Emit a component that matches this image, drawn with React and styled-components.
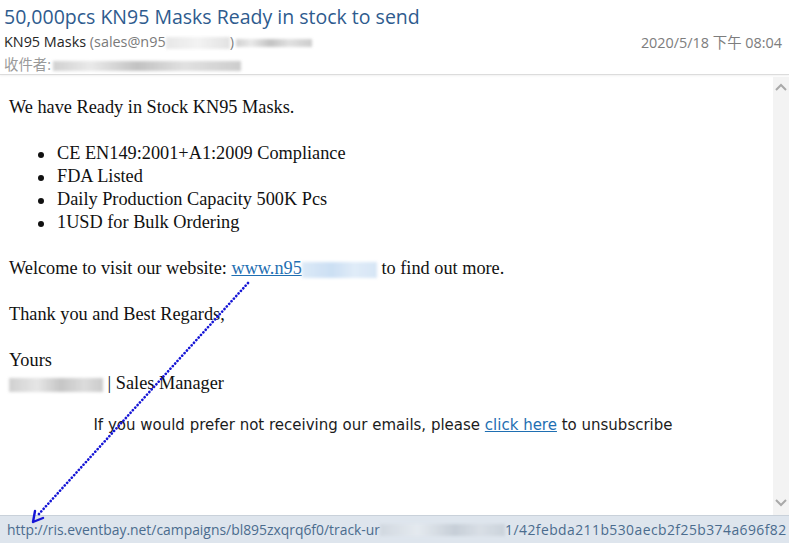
import React from "react";
import styled, { createGlobalStyle } from "styled-components";

const GlobalStyle = createGlobalStyle`
  html, body {
    margin: 0;
    padding: 0;
    background: #ffffff;
  }
  #root {
    width: 789px;
    height: 543px;
  }
`;

const Window = styled.div`
  position: relative;
  width: 789px;
  height: 543px;
  display: flex;
  flex-direction: column;
  overflow: hidden;
  background: #ffffff;
  font-family: "Open Sans", "Noto Sans CJK TC", sans-serif;
`;

const Header = styled.div`
  height: 74px;
  padding: 0 7px 0 4px;
  display: flex;
  flex-direction: column;
  border-bottom: 1px solid #dcdcdc;
  box-shadow: 0 1px 2px rgba(0, 0, 0, 0.06);
`;

const Subject = styled.div`
  font-size: 19.5px;
  line-height: 28px;
  margin-top: 3px;
  color: #2e5b8e;
  white-space: nowrap;
`;

const MetaRow = styled.div`
  display: flex;
  align-items: center;
  justify-content: space-between;
  height: 22px;
  font-size: 14.4px;
  white-space: nowrap;
`;

const Sender = styled.span`
  color: #262626;
`;

const Muted = styled.span`
  color: ${(p) => p.$color || "#7a7a7a"};
`;

const Blur = styled.span`
  display: inline-block;
  vertical-align: middle;
  width: ${(p) => p.$w}px;
  height: ${(p) => p.$h || 10}px;
  margin: 0 ${(p) => p.$gap || 0}px;
  background: ${(p) => p.$bg || "linear-gradient(90deg, #c9c9c9, #e6e6e6 20%, #b8b8b8 45%, #dcdcdc 70%, #c4c4c4)"};
  filter: blur(1.6px);
  opacity: 0.85;
`;

const Main = styled.div`
  flex: 1;
  display: flex;
  min-height: 0;
  margin-top: 2px;
`;

const Body = styled.div`
  flex: 1;
  padding: 19px 0 0 9px;
  font-family: "Liberation Serif", "Times New Roman", serif;
  font-size: 18.3px;
  line-height: 23px;
  color: #111111;
`;

const Para = styled.p`
  margin: 0 0 ${(p) => (p.$last ? 0 : 23)}px;
`;

const List = styled.ul`
  margin: 0 0 23px;
  padding-left: 48px;
  list-style: none;
`;

const Item = styled.li`
  position: relative;
  &::before {
    content: "";
    position: absolute;
    left: -19px;
    top: 10px;
    width: 6px;
    height: 6px;
    border-radius: 50%;
    background: #111111;
  }
`;

const Link = styled.a`
  color: #1f6fb2;
  text-decoration: underline;
`;

const Footer = styled.div`
  margin-top: 19px;
  text-align: center;
  font-family: "DejaVu Sans", Verdana, sans-serif;
  font-size: 15px;
  color: #1c1c1c;
  padding-right: 16px;
`;

const Scrollbar = styled.div`
  width: 16px;
  background: #f3f3f3;
  display: flex;
  flex-direction: column;
  justify-content: space-between;
  align-items: center;
  padding: 6px 0 8px;
`;

const StatusBar = styled.div`
  height: 27px;
  display: flex;
  align-items: center;
  padding-left: 7px;
  background: #dee5ed;
  border-top: 1px solid #c9d1da;
  font-family: "Open Sans", sans-serif;
  font-size: 13.9px;
  color: #4b6c8e;
  white-space: nowrap;
`;

const Hash = styled.span`
  letter-spacing: 0.45px;
`;

const Overlay = styled.svg`
  position: absolute;
  left: 0;
  top: 0;
  pointer-events: none;
`;

const Chevron = ({ up }) => (
  <svg width="12" height="8" viewBox="0 0 12 8">
    <path
      d={up ? "M1 7 L6 2 L11 7" : "M1 1 L6 6 L11 1"}
      fill="none"
      stroke="#a9a9a9"
      strokeWidth="2"
    />
  </svg>
);

const bullets = [
  "CE EN149:2001+A1:2009 Compliance",
  "FDA Listed",
  "Daily Production Capacity 500K Pcs",
  "1USD for Bulk Ordering",
];

export default function App() {
  return (
    <Window>
      <GlobalStyle />
      <Header>
        <Subject>50,000pcs KN95 Masks Ready in stock to send</Subject>
        <MetaRow>
          <span>
            <Sender>KN95 Masks </Sender>
            <Muted>(sales@n95</Muted>
            <Blur $w={64} $h={12} $bg="linear-gradient(90deg,#e4e4e4,#f1f1f1 50%,#dedede)" />
            <Muted>)</Muted>
            <Blur $w={76} $h={8} $gap={2} />
          </span>
          <Muted $color="#7d7d7d">2020/5/18 下午 08:04</Muted>
        </MetaRow>
        <MetaRow>
          <span>
            <Muted $color="#9a9a9a">收件者:</Muted>
            <Blur $w={188} $h={10} $gap={2} />
          </span>
        </MetaRow>
      </Header>
      <Main>
        <Body>
          <Para>We have Ready in Stock KN95 Masks.</Para>
          <List>
            {bullets.map((b) => (
              <Item key={b}>{b}</Item>
            ))}
          </List>
          <Para>
            Welcome to visit our website: <Link href="#">www.n95</Link>
            <Blur $w={75} $h={16} $bg="linear-gradient(90deg,#d6e6f6,#c3daf2 40%,#dbe9f7 70%,#cfe1f4)" />{" "}
            to find out more.
          </Para>
          <Para>Thank you and Best Regards,</Para>
          <Para $last>
            Yours
            <br />
            <Blur $w={94} $h={14} $bg="linear-gradient(90deg,#c8c8c8,#e2e2e2 30%,#bcbcbc 55%,#d6d6d6 80%,#c2c2c2)" /> | Sales Manager
          </Para>
          <Footer>
            If you would prefer not receiving our emails, please{" "}
            <Link href="#">click here</Link> to unsubscribe
          </Footer>
        </Body>
        <Scrollbar>
          <Chevron up />
          <Chevron />
        </Scrollbar>
      </Main>
      <StatusBar>
        http://ris.eventbay.net/campaigns/bl895zxqrq6f0/track-ur
        <Blur $w={125} $h={12} $bg="linear-gradient(90deg,#cfd6de,#e6ebf0 30%,#c3cbd4 60%,#d8dee5 80%,#c8d0d8)" />
        <Hash>1/42febda211b530aecb2f25b374a696f82</Hash>
      </StatusBar>
      <Overlay width="789" height="543" viewBox="0 0 789 543">
        <line
          x1="248"
          y1="283"
          x2="38"
          y2="515"
          stroke="#1515d6"
          strokeWidth="2.6"
          strokeDasharray="0.1 3.4"
          strokeLinecap="round"
        />
        <path d="M33 522 L35 511 M33 522 L43 518" stroke="#1515d6" strokeWidth="2.4" strokeLinecap="round" />
      </Overlay>
    </Window>
  );
}
